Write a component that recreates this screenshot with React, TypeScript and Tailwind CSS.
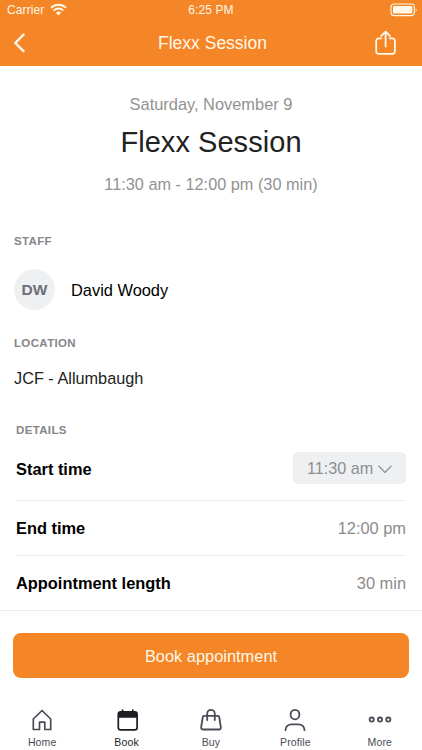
import type { ReactNode } from "react";

type Tab = {
  label: string;
  active?: boolean;
  icon: ReactNode;
};

const tabs: Tab[] = [
  {
    label: "Home",
    icon: (
      <svg width="22" height="24" viewBox="0 0 22 24" fill="none" stroke="currentColor" strokeWidth="1.7" strokeLinejoin="round">
        <path d="M2.3 11 11 2.5l8.700 8.500v10.500h-5.900v-7.300H8.500v7.300H2.300z" />
      </svg>
    ),
  },
  {
    label: "Book",
    active: true,
    icon: (
      <svg className="translate-x-[1px]" width="22" height="24" viewBox="0 0 22 24" fill="none" stroke="currentColor" strokeWidth="1.7">
        <rect x="1.3" y="3.8" width="18.800" height="18" rx="2.4" />
        <path d="M1.300 9.800V5.700c0-1.200.8-1.900 1.900-1.900h15c1.100 0 1.900.7 1.900 1.900v4.100z" fill="currentColor" stroke="none" />
        <path d="M5.600 2.200v2.400M15.800 2.200v2.400" strokeLinecap="round" />
      </svg>
    ),
  },
  {
    label: "Buy",
    icon: (
      <svg width="22" height="24" viewBox="0 0 22 24" fill="none" stroke="currentColor" strokeWidth="1.8" strokeLinecap="round" strokeLinejoin="round">
        <path d="M4 7.900h14q1 0 1.200.9l1.600 10.200q.3 2.500-2 2.500H3.200q-2.300 0-2-2.500L2.800 8.800Q3 7.900 4 7.900z" />
        <path d="M7.200 12V5.700a3.800 3.900 0 0 1 7.600 0V12" />
      </svg>
    ),
  },
  {
    label: "Profile",
    icon: (
      <svg width="22" height="24" viewBox="0 0 22 24" fill="none" stroke="currentColor" strokeWidth="1.8" strokeLinecap="round">
        <ellipse cx="11" cy="6.6" rx="4.400" ry="4.800" />
        <path d="M1.500 22.200c.2-4 2.900-5.800 6.300-5.800h6.400c3.400 0 6.100 1.800 6.300 5.800" />
      </svg>
    ),
  },
  {
    label: "More",
    icon: (
      <svg width="24" height="24" viewBox="0 0 24 24" fill="none" stroke="currentColor" strokeWidth="1.8">
        <circle cx="3.700" cy="11.600" r="2.100" />
        <circle cx="12" cy="11.600" r="2.100" />
        <circle cx="20.300" cy="11.600" r="2.100" />
      </svg>
    ),
  },
];

function StatusBar() {
  return (
    <div className="grid h-5 grid-cols-3 items-center pl-[7px] pr-1 text-[12px] leading-5 tracking-[0.1px]">
      <div className="flex items-center gap-[6px]">
        Carrier
        <svg className="-mt-px" width="17" height="13" viewBox="0 0 17 13" fill="none" stroke="currentColor" strokeWidth="2">
          <path d="M1 4.700a10.700 10.700 0 0 1 15 0" />
          <path d="M3.700 7.600a6.800 6.800 0 0 1 9.600 0" />
          <path d="M8.500 12.400 5.900 9.800a3.700 3.700 0 0 1 5.200 0z" fill="currentColor" stroke="none" />
        </svg>
      </div>
      <div className="pr-[3px] text-center">6:25 PM</div>
      <svg className="justify-self-end" width="28" height="14" viewBox="0 0 28 14" fill="none">
        <rect x="1" y="1" width="23.400" height="11.600" rx="3" stroke="currentColor" strokeWidth="1.1" />
        <rect x="3" y="3" width="19.400" height="7.600" rx="1.300" fill="currentColor" />
        <path d="M25.800 4.800q1.700 2 0 4z" fill="currentColor" />
      </svg>
    </div>
  );
}

function Header() {
  return (
    <header className="h-[66px] bg-[#f48627] text-[#fff7e8]">
      <StatusBar />
      <div className="grid h-[46px] grid-cols-[60px_1fr_60px] items-center">
        <button type="button" aria-label="Back" className="pl-3">
          <svg width="14" height="20" viewBox="0 0 14 20" fill="none" stroke="currentColor" strokeWidth="2.4" strokeLinecap="round" strokeLinejoin="round">
            <path d="M11.500 1.700 3.300 10l8.200 8.100" />
          </svg>
        </button>
        <div className="pl-[3px] text-center text-[17.5px]">Flexx Session</div>
        <button type="button" aria-label="Share" className="pl-[12px]">
          <svg width="24" height="26" viewBox="0 0 24 26" fill="none" stroke="currentColor" strokeWidth="1.8" strokeLinecap="round" strokeLinejoin="round">
            <path d="M7.300 8.300H4.900a2.700 2.700 0 0 0-2.700 2.700v10.200a2.700 2.700 0 0 0 2.700 2.700h13.300a2.700 2.700 0 0 0 2.700-2.700V11a2.700 2.700 0 0 0-2.700-2.700h-2.400" />
            <path d="M11.600 16.400V1.700M7.200 6l4.400-4.400L16 6" />
          </svg>
        </button>
      </div>
    </header>
  );
}

function SectionLabel({ children }: { children: string }) {
  return <h2 className="text-[11.5px] leading-4 font-bold tracking-[0.35px] text-[#85868a]">{children}</h2>;
}

export default function App() {
  return (
    <div className="flex h-[750px] w-[422px] flex-col overflow-hidden bg-white font-['Liberation_Sans',Arial,sans-serif] text-[16.4px] leading-5 text-black">
      <Header />

      <main className="h-[545px] border-b border-[#ebecee]">
        <section className="flex flex-col items-center pt-7 text-[#929292]">
          <p>Saturday, November 9</p>
          <h1 className="mt-2.5 text-[29px] leading-9 tracking-[0.05px] text-[#222]">Flexx Session</h1>
          <p className="mt-3.5 text-[16.300px]">11:30 am - 12:00 pm (30 min)</p>
        </section>

        <section className="mt-[39px] pl-3.5">
          <SectionLabel>STAFF</SectionLabel>
          <div className="mt-5 flex items-center gap-4">
            <span className="grid size-[41px] place-items-center rounded-full bg-[#eff0f2] text-[15.5px] font-bold text-[#6c6f77]">
              DW
            </span>
            <span>David Woody</span>
          </div>
        </section>

        <section className="mt-[25px] pl-3.5">
          <SectionLabel>LOCATION</SectionLabel>
          <p className="mt-[17px] text-[16.300px] text-[#222]">JCF - Allumbaugh</p>
        </section>

        <section className="mt-[34px] mr-4 ml-4">
          <SectionLabel>DETAILS</SectionLabel>
          <div className="flex h-[63px] items-center justify-between border-b border-[#ebecee]">
            <span className="font-bold">Start time</span>
            <button type="button" className="-mt-0.5 flex h-8 w-[113px] items-center gap-[5px] rounded-[5px] bg-[#eff0f2] pl-3.5 text-[16.200px] text-[#8e8f92]">
              11:30 am
              <svg className="mt-[3px]" width="14" height="9" viewBox="0 0 14 9" fill="none" stroke="currentColor" strokeWidth="1.1" strokeLinecap="round" strokeLinejoin="round">
                <path d="m.8 1 6.200 6.500L13.200 1" />
              </svg>
            </button>
          </div>
          <div className="flex h-[55px] items-center justify-between border-b border-[#ebecee]">
            <span className="font-bold">End time</span>
            <span className="text-[#8c8c8c]">12:00 pm</span>
          </div>
          <div className="flex h-[54px] items-center justify-between">
            <span className="font-bold">Appointment length</span>
            <span className="text-[#8c8c8c]">30 min</span>
          </div>
        </section>
      </main>

      <button type="button" className="mx-[13px] mt-[22px] h-[45px] shrink-0 rounded-lg bg-[#f48627] text-[#fff7e8]">
        Book appointment
      </button>

      <nav className="mt-[30px] grid grid-cols-5">
        {tabs.map((tab) => (
          <button
            key={tab.label}
            type="button"
            className={`flex flex-col items-center text-[10.5px] leading-3 tracking-[0.15px] ${
              tab.active ? "text-[#1d1d22]" : "text-[#4b4b55]"
            }`}
          >
            {tab.icon}
            <span className="mt-1">{tab.label}</span>
          </button>
        ))}
      </nav>
    </div>
  );
}
